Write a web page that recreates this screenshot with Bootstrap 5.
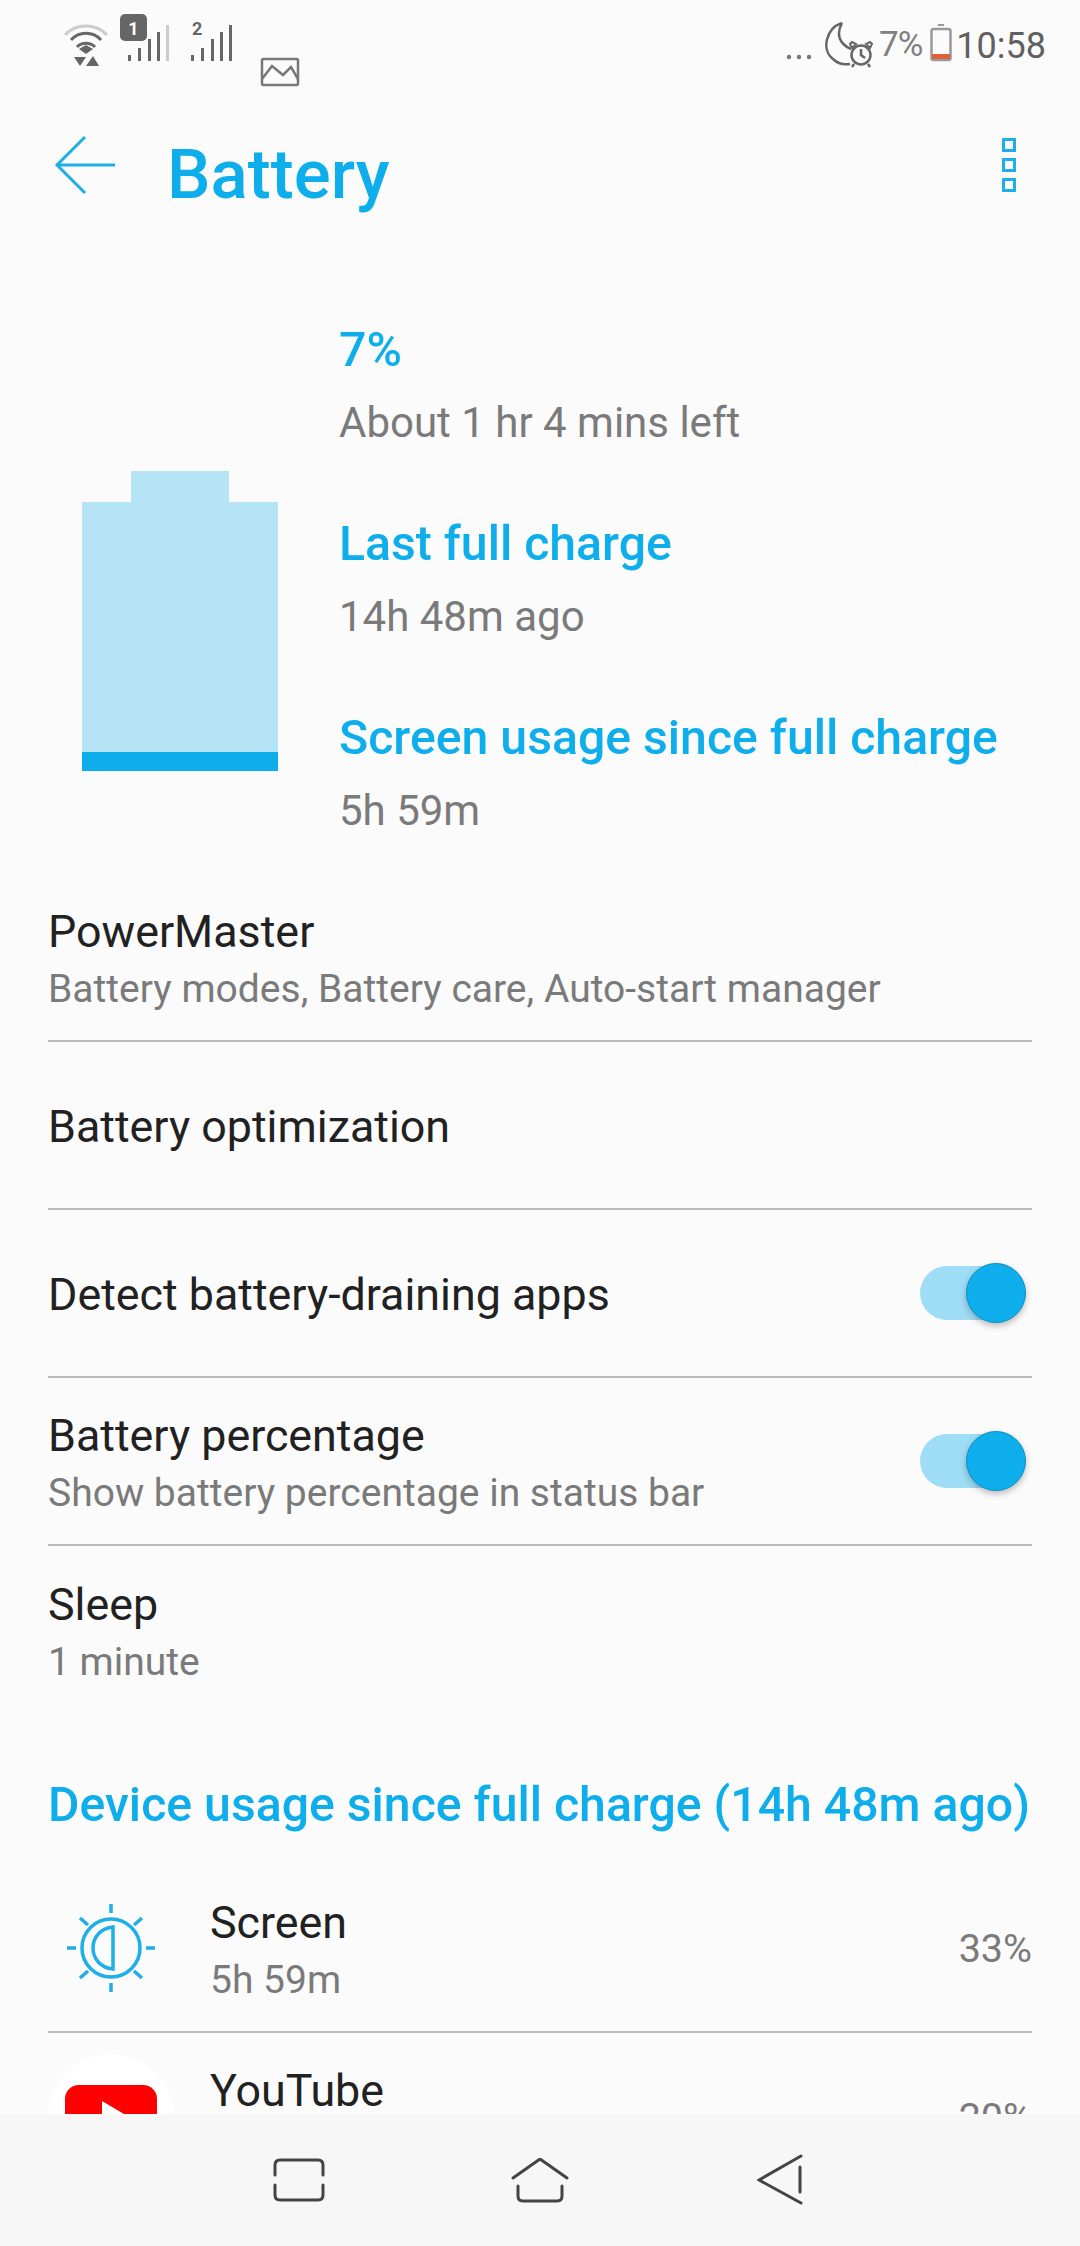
<!DOCTYPE html>
<html lang="en">
<head>
  <meta charset="UTF-8" />
  <title>Battery</title>
  <link href="https://cdn.jsdelivr.net/npm/bootstrap@5.3.3/dist/css/bootstrap.min.css" rel="stylesheet" />
  <style>
    html, body { height: 2246px; overflow: hidden; }
    body { background: #fbfbfb; font-family: Roboto, "Liberation Sans", sans-serif; color: #212121; position: relative; }
    .status-strip { height: 100px; padding: 14px 34px 0 64px; color: #666; }
    .status-strip svg { display: block; flex-shrink: 0; }
    .status-pct { font-size: 35px; line-height: 40px; color: #808080; margin-top: 11px; letter-spacing: -1px; }
    .status-time { font-size: 36px; line-height: 40px; color: #606060; margin-top: 12px; }
    .app-bar { height: 132px; padding: 0 64px 2px 54px; }
    .app-title { font-size: 69px; font-weight: 500; color: #0eaeec; margin: 18px 0 0 51px; line-height: 1; }
    .kebab { width: 14px; height: 14px; border: 3px solid #1eaee8; display: block; }
    .summary { height: 642px; padding-left: 82px; }
    .batt-col { width: 257px; padding-top: 239px; flex-shrink: 0; }
    .batt-cap { width: 98px; height: 31px; margin-left: 49px; background: #b4e4f6; }
    .batt-body { width: 196px; height: 269px; background: #b4e4f6; }
    .batt-fill { height: 19px; background: #0eaeec; }
    .sum-col { padding-top: 92px; }
    .sum-item { height: 194px; }
    .sum-head { font-size: 48.2px; font-weight: 500; color: #0eaeec; line-height: 52px; white-space: nowrap; }
    .sum-sub { font-size: 42px; color: #7a7a7a; line-height: 48px; margin-top: 23px; }
    .settings-list { margin: 0 48px; background: transparent; }
    .settings-list .list-group-item { height: 168px; padding: 3px 0 0; background: transparent; border-color: #bdbdbd; border-width: 0 0 2px; color: #212121; }
    .settings-list .list-group-item:last-child { border-bottom-width: 0; }
    .settings-list .usage-item.list-group-item { padding-top: 0; }
    .row-title { font-size: 44.8px; line-height: 52px; }
    .row-sub { font-size: 39px; line-height: 46px; color: #7a7a7a; margin-top: 8px; }
    .toggle-track { width: 105px; height: 54px; border-radius: 27px; background: #9fdcf6; margin: 0 7px 3px 0; }
    .toggle-knob { width: 60px; height: 60px; border-radius: 50%; background: #0eaeec; border: 1px solid #0a8fc4; box-shadow: 0 3px 6px rgba(0,0,0,.25); flex-shrink: 0; margin-right: -1px; }
    .section-head { height: 151px; margin: 0 48px; padding-top: 65px; font-size: 48.2px; font-weight: 500; color: #0eaeec; line-height: 52px; white-space: nowrap; }
    .icon-slot { width: 126px; height: 126px; margin-right: 36px; flex-shrink: 0; }
    .yt-disc { background: #fff; border-radius: 50%; }
    .pct-text { font-size: 39.5px; color: #7a7a7a; padding-top: 2px; }
    .nav-strip { position: absolute; left: 0; right: 0; bottom: 0; height: 132px; background: #f7f7f7; }
    .nav-strip svg { position: absolute; }
  </style>
</head>
<body>
  <!-- status bar -->
  <div class="status-strip d-flex align-items-start">
    <svg width="44" height="46" viewBox="0 0 44 46" fill="none" style="margin-top:9px">
      <path d="M1 12C12 0 32 0 43 12" stroke="#ccc" stroke-width="3"/>
      <path d="M7 17C15 8 29 8 37 17M13 24C18 19 26 19 31 24" stroke="#666" stroke-width="3"/>
      <path d="M15 26L22 22L29 26L22 31Z" fill="#666"/>
      <path d="M10 34H22L16 43Z M22 43L29 33L35 43Z" fill="#666"/>
    </svg>
    <svg width="52" height="50" viewBox="0 0 52 50" style="margin-left:12px">
      <rect x="0" y="0" width="27" height="27" rx="5" fill="#666"/>
      <text x="13.500" y="21" font-family="Roboto" font-size="18" font-weight="700" fill="#fff" text-anchor="middle">1</text>
      <rect x="8" y="41" width="3" height="6" fill="#666"/><rect x="18" y="34" width="3" height="13" fill="#666"/>
      <rect x="28" y="25" width="3" height="22" fill="#666"/><rect x="37" y="18" width="3" height="29" fill="#666"/>
      <rect x="46" y="11" width="3" height="36" fill="#ccc"/>
    </svg>
    <svg width="44" height="50" viewBox="0 0 44 50" style="margin-left:19px">
      <text x="1" y="21" font-family="Roboto" font-size="18" font-weight="700" fill="#666">2</text>
      <rect x="0" y="41" width="3" height="6" fill="#666"/><rect x="10" y="34" width="3" height="13" fill="#666"/>
      <rect x="20" y="25" width="3" height="22" fill="#666"/><rect x="29" y="18" width="3" height="29" fill="#666"/>
      <rect x="38" y="11" width="3" height="36" fill="#666"/>
    </svg>
    <svg width="40" height="30" viewBox="0 0 40 30" fill="none" stroke="#777" stroke-width="2.500" style="margin:43px 0 0 25px">
      <rect x="2" y="2" width="36" height="26" rx="1.500"/>
      <path d="M2 22L12 9L23 18L31 10L38 22"/>
    </svg>
    <div class="ms-auto d-flex align-items-start">
      <svg width="30" height="10" viewBox="0 0 30 10" fill="#777" style="margin-top:38px">
        <circle cx="4" cy="5" r="2.200"/><circle cx="14" cy="5" r="2.200"/><circle cx="24" cy="5" r="2.200"/>
      </svg>
      <svg width="56" height="48" viewBox="0 0 56 48" fill="none" stroke="#666" stroke-width="2.500" class="ms-2" style="margin-top:8px">
        <path d="M19 1C3 6 -2 28 10 37C15 42 21 43 27 42M19 1C13 12 16 22 28 27"/>
        <circle cx="38" cy="33" r="9.500"/>
        <path d="M38 27V33L42 36M31 42L29 45M45 42L47 45"/>
        <path d="M29 26L33 22L29 20L27 22ZM47 26L43 22L47 20L49 22Z" stroke-width="2"/>
      </svg>
      <span class="status-pct">7%</span>
      <svg width="22" height="38" viewBox="0 0 22 38" class="ms-2" fill="none" style="margin-top:10px">
        <rect x="8" y="0" width="6" height="2" fill="#999"/>
        <rect x="1.500" y="5" width="19" height="31" rx="2" stroke="#999" stroke-width="2.500"/>
        <rect x="2" y="30" width="18" height="5" fill="#e0603a"/>
      </svg>
      <span class="status-time ms-1">10:58</span>
    </div>
  </div>

  <!-- app bar -->
  <div class="app-bar d-flex align-items-center">
    <svg width="62" height="60" viewBox="0 0 62 60" fill="none" stroke="#1eaee8" stroke-width="3">
      <path d="M31 2L3 30L31 58M3 30H61"/>
    </svg>
    <h1 class="app-title">Battery</h1>
    <div class="ms-auto d-flex flex-column" style="gap:6px">
      <span class="kebab"></span><span class="kebab"></span><span class="kebab"></span>
    </div>
  </div>

  <!-- battery summary -->
  <div class="summary d-flex">
    <div class="batt-col">
      <div class="batt-cap"></div>
      <div class="batt-body d-flex flex-column justify-content-end"><div class="batt-fill"></div></div>
    </div>
    <div class="sum-col">
      <div class="sum-item"><div class="sum-head">7%</div><div class="sum-sub">About 1 hr 4 mins left</div></div>
      <div class="sum-item"><div class="sum-head">Last full charge</div><div class="sum-sub">14h 48m ago</div></div>
      <div class="sum-item"><div class="sum-head">Screen usage since full charge</div><div class="sum-sub">5h 59m</div></div>
    </div>
  </div>

  <!-- settings rows -->
  <div class="list-group list-group-flush settings-list">
    <div class="list-group-item d-flex flex-column justify-content-center">
      <div class="row-title">PowerMaster</div><div class="row-sub">Battery modes, Battery care, Auto-start manager</div>
    </div>
    <div class="list-group-item d-flex align-items-center"><div class="row-title">Battery optimization</div></div>
    <div class="list-group-item d-flex align-items-center justify-content-between">
      <div class="row-title">Detect battery-draining apps</div>
      <span class="toggle-track d-flex align-items-center justify-content-end"><span class="toggle-knob"></span></span>
    </div>
    <div class="list-group-item d-flex align-items-center justify-content-between">
      <div><div class="row-title">Battery percentage</div><div class="row-sub">Show battery percentage in status bar</div></div>
      <span class="toggle-track d-flex align-items-center justify-content-end"><span class="toggle-knob"></span></span>
    </div>
    <div class="list-group-item d-flex flex-column justify-content-center">
      <div class="row-title">Sleep</div><div class="row-sub">1 minute</div>
    </div>
  </div>

  <div class="section-head">Device usage since full charge (14h 48m ago)</div>

  <!-- usage rows -->
  <div class="list-group list-group-flush settings-list">
    <div class="list-group-item usage-item d-flex align-items-center">
      <div class="icon-slot d-flex align-items-center justify-content-center">
        <svg width="90" height="90" viewBox="0 0 90 90" fill="none" stroke="#1eaee8" stroke-width="3.500">
          <circle cx="45" cy="45" r="29"/>
          <path d="M47 24V66C35 65 27 56 27 45C27 34 35 25 47 24Z"/>
          <path d="M45 1V10M45 80V89M1 45H10M80 45H89M14 15L22 22M76 15L68 22M14 75L22 68M76 75L68 68"/>
        </svg>
      </div>
      <div class="flex-grow-1 pt-1"><div class="row-title">Screen</div><div class="row-sub">5h 59m</div></div>
      <div class="pct-text">33%</div>
    </div>
    <div class="list-group-item usage-item d-flex align-items-center">
      <div class="icon-slot yt-disc d-flex align-items-center justify-content-center">
        <svg width="92" height="64" viewBox="0 0 92 64">
          <rect x="0" y="0" width="92" height="64" rx="14" fill="#f00"/>
          <path d="M37 16L64 32L37 48Z" fill="#fff"/>
        </svg>
      </div>
      <div class="flex-grow-1 align-self-start" style="padding-top:32px"><div class="row-title">YouTube</div></div>
      <div class="pct-text">20%</div>
    </div>
  </div>

  <!-- nav bar -->
  <div class="nav-strip">
    <svg style="left:273px;top:44px" width="54" height="44" viewBox="0 0 54 44" fill="none" stroke="#444" stroke-width="3" stroke-linecap="round">
      <path d="M2 17V7Q2 2 7 2H45Q50 2 50 7V17M2 27V37Q2 42 7 42H45Q50 42 50 37V27"/>
    </svg>
    <svg style="left:511px;top:44px" width="58" height="46" viewBox="0 0 58 46" fill="none" stroke="#444" stroke-width="3" stroke-linecap="round">
      <path d="M2 20L29 1L56 20M7 28V38Q7 43 12 43H46Q51 43 51 38V28"/>
    </svg>
    <svg style="left:757px;top:40px" width="46" height="52" viewBox="0 0 46 52" fill="none" stroke="#444" stroke-width="3" stroke-linecap="round">
      <path d="M44 2L2 26L44 49M43 13V38"/>
    </svg>
  </div>

  <script src="https://cdn.jsdelivr.net/npm/bootstrap@5.3.3/dist/js/bootstrap.bundle.min.js"></script>
</body>
</html>
